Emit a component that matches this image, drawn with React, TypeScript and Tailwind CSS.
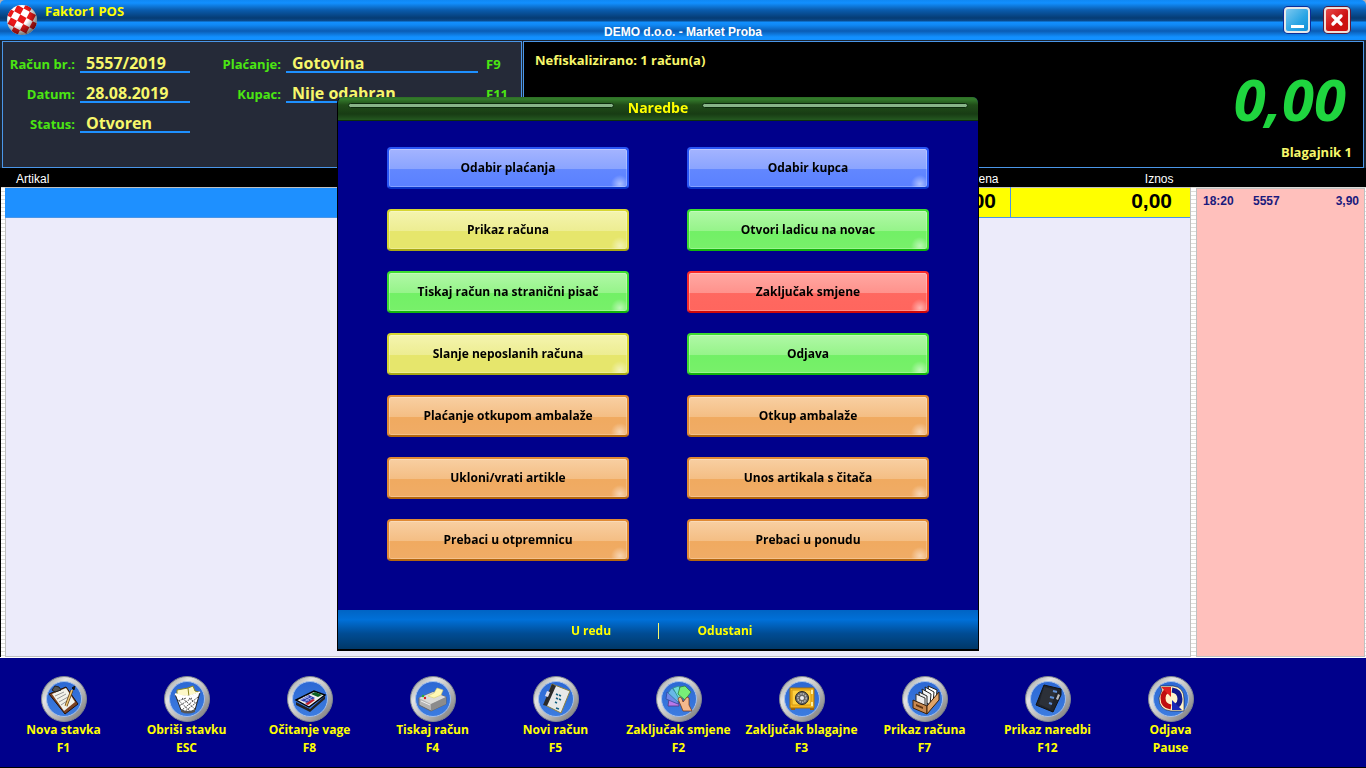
import type { ReactNode } from "react";

type Tone = "blue" | "yellow" | "green" | "red" | "orange";

// Glossy two-step fill with a small glint in the lower right corner.
const TONES: Record<Tone, string> = {
  blue: "border-[#2a56f5] border-b-[#0a33c8] bg-[radial-gradient(circle_at_97%_92%,rgba(255,255,255,0.5),transparent_9px),linear-gradient(#a4b4ff,#8aa4ff_52%,#6287ff_54%,#5a80ff)]",
  yellow: "border-[#d6d632] border-b-[#a8a814] bg-[radial-gradient(circle_at_97%_92%,rgba(255,255,255,0.5),transparent_9px),linear-gradient(#f4f4ae,#eded92_52%,#e6e66c_54%,#e6e66c)]",
  green: "border-[#3ddc30] border-b-[#14b40c] bg-[radial-gradient(circle_at_97%_92%,rgba(255,255,255,0.5),transparent_9px),linear-gradient(#b0f8a6,#96f48a_52%,#72f066_54%,#78f06a)]",
  red: "border-[#f82c2c] border-b-[#d00808] bg-[radial-gradient(circle_at_97%_92%,rgba(255,255,255,0.5),transparent_9px),linear-gradient(#ffa8a2,#ff928c_52%,#ff6860_54%,#ff665e)]",
  orange: "border-[#e08a34] border-b-[#b4660e] bg-[radial-gradient(circle_at_97%_92%,rgba(255,255,255,0.5),transparent_9px),linear-gradient(#f8cfa2,#f4be84_52%,#f0aa60_54%,#f0ac66)]",
};

const COMMANDS: { label: string; tone: Tone }[] = [
  { label: "Odabir plaćanja", tone: "blue" },
  { label: "Odabir kupca", tone: "blue" },
  { label: "Prikaz računa", tone: "yellow" },
  { label: "Otvori ladicu na novac", tone: "green" },
  { label: "Tiskaj račun na stranični pisač", tone: "green" },
  { label: "Zaključak smjene", tone: "red" },
  { label: "Slanje neposlanih računa", tone: "yellow" },
  { label: "Odjava", tone: "green" },
  { label: "Plaćanje otkupom ambalaže", tone: "orange" },
  { label: "Otkup ambalaže", tone: "orange" },
  { label: "Ukloni/vrati artikle", tone: "orange" },
  { label: "Unos artikala s čitača", tone: "orange" },
  { label: "Prebaci u otpremnicu", tone: "orange" },
  { label: "Prebaci u ponudu", tone: "orange" },
];

// Glyphs are drawn on a 46x46 canvas, on top of the round badge.
const TOOLS: { label: string; hotkey: string; glyph: ReactNode }[] = [
  {
    label: "Nova stavka",
    hotkey: "F1",
    glyph: (
      <>
        <path d="m8 18 17-7 12 17-13 10Z" fill="#7a4020" stroke="#201008" />
        <path d="m11 18 14-6 9 14-11 9Z" fill="#f2f2ea" />
        <path d="m14 20 9-4M16 23l9-5M18 26l9-5M20 29l6-4" stroke="#9a9a9a" />
        <path d="m11 14 3-4 4 1 2 3-6 2Z" fill="#555" stroke="#222" />
        <path d="m25 30 6-16" stroke="#5a3a10" strokeWidth="3" />
        <path d="m25 30 6-16" stroke="#f0c878" strokeWidth="1.6" />
        <path d="m31 12 3-2-1 4Z" fill="#111" stroke="#111" />
      </>
    ),
  },
  {
    label: "Obriši stavku",
    hotkey: "ESC",
    glyph: (
      <>
        <path d="M13 19v-5l11-2 5-2 2 5 4 1-2 6-18 2Z" fill="#fdf8c8" stroke="#8c8620" />
        <path d="m24 12 1 9" stroke="#8c8620" />
        <path d="M11 18q11 6 25-2l-5 18q-7 4-14 0Z" fill="#fff" stroke="#222" />
        <path d="m13 23 14 13m-9-14 13 11m-6-11 8 6M34 21 18 34m10-12-13 8m7-8-8 3m19 1-13 10" stroke="#555" strokeDasharray="2 1" />
        <path d="M11 18q11 6 25-2" stroke="#fff" strokeWidth="2" />
        <path d="M17 33q7 4 14 0v3q-7 3-14 0Z" fill="#555" />
      </>
    ),
  },
  {
    label: "Očitanje vage",
    hotkey: "F8",
    glyph: (
      <>
        <path d="m9 26 14 7 15-13v3L23 36 9 29Z" fill="#222" />
        <path d="m9 24 18-9 11 4-16 12Z" fill="#eee" stroke="#000" strokeWidth="1.4" />
        <path d="m13 24 9-5 6 3-8 5Z" fill="#3040b0" />
        <path d="m14 24 8-4m-5 6 8-5m-9 0 6 4m-4-5 7 4" stroke="#c0c8ff" strokeWidth=".7" />
        <path d="m18 28 8-5 2 1-7 5Z" fill="#c02030" />
        <path d="m24 18 4-2 7 3-4 2Z" fill="#0c6024" />
      </>
    ),
  },
  {
    label: "Tiskaj račun",
    hotkey: "F4",
    glyph: (
      <>
        <path d="m9 22 14-6 13 5v7l-15 7-12-6Z" fill="#b4b4b4" stroke="#666" />
        <path d="m9 22 14-6 13 5-15 7Z" fill="#dcdcd8" />
        <path d="m21 28 15-7v7l-15 7Z" fill="#8c8c8c" />
        <path d="m18 20 6-3 3-5 6 2-2 5-7 3Z" fill="#fff9b4" stroke="#d8cc70" strokeWidth=".6" />
        <circle cx="13" cy="20" r="1.2" fill="#20b030" />
        <circle cx="15" cy="22" r="1.2" fill="#d02020" />
        <path d="m11 25 9 4" stroke="#eee" />
      </>
    ),
  },
  {
    label: "Novi račun",
    hotkey: "F5",
    glyph: (
      <>
        <path d="m19 8 18 7-9 22-16-8Z" fill="#e8e8e8" stroke="#8c8040" />
        <path d="m19 8 4 2-9 20-4-1Z" fill="#2a2a2a" />
        <path d="m14 15 3 1-2 5-3-1Z" fill="#dde" />
        <path d="m23 18 2 1m1 0 2 1m-5 2 2 1m1 0 2 1m-6 2 2 1m-1 5 3 1" stroke="#126080" strokeWidth="1.5" />
      </>
    ),
  },
  {
    label: "Zaključak smjene",
    hotkey: "F2",
    glyph: (
      <>
        <path d="m12 30 1-7 9 1 1 6Z" fill="#b878e8" stroke="#503880" strokeWidth=".8" />
        <path d="m10 23 1-7 12 7-1 5Z" fill="#7088e8" stroke="#3448a0" strokeWidth=".8" />
        <path d="m12 17 4-5 9 11-3 3Z" fill="#68b8e8" stroke="#3078a0" strokeWidth=".8" />
        <path d="m17 12 6-2 3 12-3 1Z" fill="#70dcd8" stroke="#30908c" strokeWidth=".8" />
        <path d="m24 11 5-1 6 6-6 8-7-6Z" fill="#78ee78" stroke="#308040" strokeWidth=".8" />
        <path d="M22 23q2-4 4 0l1 3 4-5 2 1v7l3 6h-9l-2-5Z" fill="#f4b88c" stroke="#783c1c" strokeWidth=".8" />
      </>
    ),
  },
  {
    label: "Zaključak blagajne",
    hotkey: "F3",
    glyph: (
      <>
        <path d="M12 31h4v3h-4zm19 0h4v3h-4z" fill="#986010" />
        <path d="M11 12h24v20H11Z" fill="#f8b820" stroke="#a87008" />
        <path d="M13 14h19v15H13Z" fill="#ffd040" stroke="#d49810" />
        <circle cx="23" cy="22" r="6.5" fill="#666" stroke="#222" />
        <circle cx="23" cy="22" r="4.2" stroke="#bbb" strokeWidth="1.5" strokeDasharray="1.5 1" />
        <circle cx="23" cy="22" r="2" fill="#eee" />
        <path d="M33 14v4m0 8v4" stroke="#fff0a0" strokeWidth="2" />
      </>
    ),
  },
  {
    label: "Prikaz računa",
    hotkey: "F7",
    glyph: (
      <>
        <path d="m26 10 9 4-1 11-6-4Z" fill="#fff" stroke="#222" />
        <path d="m23 11 9 5-1 11-6-4Z" fill="#fff" stroke="#222" />
        <path d="m20 13 9 5-1 11-6-4Z" fill="#f4f4f4" stroke="#222" />
        <path d="m17 16 8 4v11l-7-4Z" fill="#eee" stroke="#222" />
        <path d="m14 18 9 4v10l-9-4Z" fill="#eee" stroke="#333" />
        <path d="m11 24 14 6v8l-14-6Z" fill="#c88850" stroke="#3c2008" />
        <path d="m25 30 12-14v8L25 38Z" fill="#e0a468" stroke="#3c2008" />
        <path d="m14 28 7 3v2l-7-3Z" fill="#603410" />
      </>
    ),
  },
  {
    label: "Prikaz naredbi",
    hotkey: "F12",
    glyph: (
      <>
        <path d="m19 9 17 4v6l-8 17-17-7Z" fill="#20242c" stroke="#111" />
        <path d="m19 11 13 3-7 19-11-5Z" fill="#2c3038" />
        <path d="m28 15 4 1m-7 5 4 1m-5 5 3 1" stroke="#6090d8" strokeWidth="2" />
        <path d="m33 18 2 1-2 5-2-1Z" fill="#bbb" />
      </>
    ),
  },
  {
    label: "Odjava",
    hotkey: "Pause",
    glyph: (
      <>
        <path d="M12 10h13q11 1 11 13v12H23q-12-1-12-13l3-8Z" fill="#fff4c8" stroke="#181830" strokeWidth=".6" />
        <path d="M23 31q-8-1-8-9 0-5 4-7" stroke="#c01010" strokeWidth="5" />
        <path d="M13 11h10v10Z" fill="#e02020" />
        <path d="M24 14q8 1 8 9 0 5-4 7" stroke="#10188c" strokeWidth="5" />
        <path d="M34 34H24V24Z" fill="#1828b8" />
      </>
    ),
  },
];

function Field({ id, label, value, wide, hotkey }: {
  id: string;
  label: string;
  value: string;
  wide?: boolean;
  hotkey?: string;
}) {
  return (
    <div className="flex h-[30px] items-end text-[13px] leading-[18px] text-[#4be612]">
      <label htmlFor={id} className="w-[72px] shrink-0 text-right">{label}</label>
      <input
        id={id}
        readOnly
        value={value}
        className={`ml-[5px] h-[22px] border-b-2 border-[#1e90ff] bg-transparent pl-[6px] pt-1 text-base font-bold leading-4 text-[#f7f76b] outline-none ${wide ? "w-[192px]" : "w-[110px]"}`}
      />
      {hotkey && <span className="ml-2">{hotkey}</span>}
    </div>
  );
}

function Logo() {
  return (
    <svg viewBox="0 0 32 32" className="size-8" aria-hidden>
      <defs>
        <clipPath id="ball"><circle cx="16" cy="16" r="15" /></clipPath>
        <radialGradient id="shade" cx=".4" cy=".35" r=".65">
          <stop offset=".5" stopColor="#000" stopOpacity="0" />
          <stop offset="1" stopColor="#000" stopOpacity=".6" />
        </radialGradient>
      </defs>
      <g clipPath="url(#ball)">
        <path d="M0 0h32v32H0z" fill="#fff" />
        <path
          transform="rotate(28 16 16)"
          fill="#e81818"
          d="M-2-2h7v7h-7zm14 0h7v7h-7zm14 0h7v7h-7zM5 5h7v7H5zm14 0h7v7h-7zM-2 12h7v7h-7zm14 0h7v7h-7zm14 0h7v7h-7zM5 19h7v7H5zm14 0h7v7h-7zM-2 26h7v7h-7zm14 0h7v7h-7zm14 0h7v7h-7z"
        />
        <path d="M0 0h32v32H0z" fill="url(#shade)" />
      </g>
    </svg>
  );
}

function TitleBar() {
  return (
    <div className="bg-[#b8b0b0]">
      <header className="relative flex h-10 items-start justify-between rounded-t-[5px] bg-[linear-gradient(#1088f4,#1290ff_3px,#0a5cae_10px,#063c74_18px,#0a4c90_21px,#1290ff_22px,#1088f4_25px,#0a5cb4_31px,#1290ff_37px,#1290ff)] pl-[6px] pr-4">
        <div className="flex gap-[7px] pt-1">
          <Logo />
          <h1 className="text-[13px] leading-[15px] text-[#ffff00]">Faktor1 POS</h1>
        </div>
        <p className="absolute inset-x-0 bottom-0 text-center font-['Liberation_Sans',sans-serif] text-xs font-bold text-white">
          DEMO d.o.o. - Market Proba
        </p>
        <div className="relative flex gap-[14px] pt-[7px]">
          <button type="button" aria-label="Minimiziraj" className="flex size-[26px] items-end justify-center rounded border-2 border-[#e8e8e8] bg-[linear-gradient(135deg,#7cc8f0,#28a4e4_60%,#1090d8)] pb-[3px] shadow-[0_0_0_1px_#0c2c98]">
            <span className="h-[3px] w-[13px] bg-white" />
          </button>
          <button type="button" aria-label="Zatvori" className="flex size-[26px] items-center justify-center rounded border-2 border-[#f0e0d8] bg-[linear-gradient(135deg,#e84848,#cc1010_60%)] shadow-[0_0_0_1px_#5c1838]">
            <svg viewBox="0 0 14 14" className="size-[14px]" aria-hidden>
              <path d="m3 3 8 8m0-8-8 8" stroke="#fff" strokeWidth="3.4" strokeLinecap="round" />
            </svg>
          </button>
        </div>
      </header>
    </div>
  );
}

function CommandsDialog() {
  return (
    <div className="pointer-events-none fixed inset-0 flex items-center justify-center pb-5 pr-[50px]">
      <section role="dialog" aria-labelledby="commands-title" className="pointer-events-auto w-[642px] overflow-hidden rounded-t-md border-x border-b-2 border-black bg-[#00008b] text-xs font-bold">
        <header className="flex h-6 items-start gap-[10px] border-b border-[#0c300c] bg-[linear-gradient(#2c6c24,#347c2c_2px,#204c18_8px,#183c14_17px,#245820)] px-[10px]">
          <span className="mt-[6px] h-[5px] flex-1 rounded-sm border border-[#0c2c0c] bg-[#88b488]" />
          <h2 id="commands-title" className="px-1 text-sm leading-[22px] text-[#ffff00]">Naredbe</h2>
          <span className="mt-[6px] h-[5px] flex-1 rounded-sm border border-[#0c2c0c] bg-[#88b488]" />
        </header>
        <div className="grid grid-cols-2 gap-x-[58px] gap-y-5 px-[49px] pb-[49px] pt-[26px]">
          {COMMANDS.map((c) => (
            <button
              key={c.label}
              type="button"
              className={`h-[42px] rounded-sm border-2 text-black shadow-[inset_0_0_0_1px_rgba(255,255,255,0.25)] ${TONES[c.tone]}`}
            >
              {c.label}
            </button>
          ))}
        </div>
        <footer className="flex h-[39px] items-center justify-center bg-[linear-gradient(#0064c4,#0070d8_25%,#004c94_60%,#003868)] pt-[2px] text-[#ffff00]">
          <button type="button" className="w-[133px]">U redu</button>
          <span className="h-4 w-px bg-[#f7f76b]" />
          <button type="button" className="w-[133px]">Odustani</button>
        </footer>
      </section>
    </div>
  );
}

export default function App() {
  return (
    <div className="flex min-h-screen flex-col border-b border-black bg-black font-['Open_Sans',sans-serif] font-[660]">
      <TitleBar />

      <div className="flex h-32 gap-px bg-[#1c2430] px-[2px] pt-px">
        <section className="flex w-[520px] gap-[19px] border border-[#4a96e8] bg-[#252a38] pt-px">
          <div>
            <Field id="receipt" label="Račun br.:" value="5557/2019" />
            <Field id="date" label="Datum:" value="28.08.2019" />
            <Field id="status" label="Status:" value="Otvoren" />
          </div>
          <div>
            <Field id="payment" label="Plaćanje:" value="Gotovina" wide hotkey="F9" />
            <Field id="customer" label="Kupac:" value="Nije odabran" wide hotkey="F11" />
          </div>
        </section>
        <section className="flex flex-1 flex-col border border-[#4a96e8] bg-black px-[11px] pb-[5px] pt-2 text-[13px] leading-5 text-[#f7f76b]">
          <p>Nefiskalizirano: 1 račun(a)</p>
          <p className="flex-1 pr-[6px] text-right text-[58px] font-bold italic leading-[58px] text-[#1fd53f]">0,00</p>
          <p className="text-right">Blagajnik 1</p>
        </section>
      </div>

      <main className="ml-px flex flex-1 bg-[linear-gradient(#000_19px,transparent_19px),repeating-linear-gradient(#fff_0_3px,#dcdcd8_3px_4px)] pr-px font-['Liberation_Sans',sans-serif] font-bold">
        <section className="flex flex-1 flex-col pl-1">
          <table className="w-full table-fixed border-collapse">
            <thead>
              <tr className="h-[19px] bg-black text-xs leading-4 text-white">
                <th className="pb-0 pl-[11px] pt-[3px] text-left font-normal">Artikal</th>
                <th className="w-[180px] pb-0 pr-[12px] pt-[3px] text-right font-normal">Cijena</th>
                <th className="w-[180px] pb-0 pr-[17px] pt-[3px] text-right font-normal">Iznos</th>
              </tr>
            </thead>
            <tbody>
              <tr className="h-[30px] border-b border-t border-b-[#4a96e8] border-t-[#c0c0c0] bg-[#ffff00] text-[21px] leading-6 text-black">
                <td className="bg-[#1e90ff]" />
                <td className="border-r border-[#4a96e8] pb-1 pr-[14px] text-right">0,00</td>
                <td className="border-r border-r-[#c0c0c0] pb-1 pr-[18px] text-right">0,00</td>
              </tr>
            </tbody>
          </table>
          <div className="flex-1 border border-t-0 border-[#c0c0c0] bg-[#ecebfa]" />
        </section>
        <aside className="ml-[5px] mt-[20px] w-[169px] border border-[#c0c0c0] bg-[#ffc0bc] pl-[6px] pr-[5px] pt-1 text-xs leading-4 text-[#1a1a7c]">
          <ul>
            <li className="flex">
              <span className="w-[50px]">18:20</span>
              <span className="flex-1">5557</span>
              <span>3,90</span>
            </li>
          </ul>
        </aside>
      </main>

      <nav className="flex h-[110px] items-start border-t border-white bg-[#00008b] pl-[2px] pt-[18px]">
        {TOOLS.map((t) => (
          <button key={t.hotkey} type="button" className="flex w-[123px] shrink-0 flex-col items-center whitespace-nowrap text-xs font-bold leading-[18px] text-[#ffff00]">
            <svg viewBox="0 0 46 46" className="-mb-px size-[46px]" fill="none" aria-hidden>
              <defs>
                <linearGradient id={`rim${t.hotkey}`} x1="0" y1="0" x2="1" y2="1">
                  <stop offset=".1" stopColor="#a8acac" />
                  <stop offset=".3" stopColor="#e4e4e4" />
                  <stop offset=".6" stopColor="#b8b8b8" />
                  <stop offset="1" stopColor="#707070" />
                </linearGradient>
                <linearGradient id={`face${t.hotkey}`} x1="0" y1="0" x2="0" y2="1">
                  <stop stopColor="#2c68d4" />
                  <stop offset="1" stopColor="#3c7ce0" />
                </linearGradient>
              </defs>
              <circle cx="23" cy="23" r="22.5" fill={`url(#rim${t.hotkey})`} stroke="#808890" />
              <circle cx="23" cy="23" r="17.5" fill={`url(#face${t.hotkey})`} stroke="#a4c0ec" />
              {t.glyph}
            </svg>
            <span>{t.label}</span>
            <span>{t.hotkey}</span>
          </button>
        ))}
      </nav>

      <CommandsDialog />
    </div>
  );
}
